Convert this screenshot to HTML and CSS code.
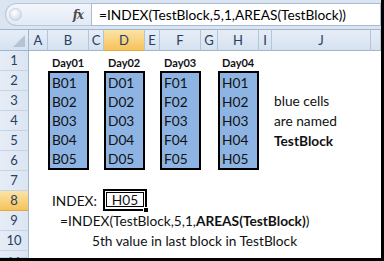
FILE: index.html
```html
<!DOCTYPE html>
<html>
<head>
<meta charset="utf-8">
<link rel="stylesheet" href="styles.css">
</head>
<body>
<div class="frame">
  <div class="fbar">
    <div class="fbox">
      <div class="namebox">
        <span class="knob"></span>
        <span class="fx">fx</span>
      </div>
      <div class="finput">=INDEX(TestBlock,5,1,AREAS(TestBlock))</div>
    </div>
  </div>
  <div class="sheet">
    <div class="ch corner"><span class="tri"></span></div>
    <div class="ch">A</div>
    <div class="ch">B</div>
    <div class="ch">C</div>
    <div class="ch sel">D</div>
    <div class="ch">E</div>
    <div class="ch">F</div>
    <div class="ch">G</div>
    <div class="ch">H</div>
    <div class="ch">I</div>
    <div class="ch">J</div>
    <div class="ch"></div>

    <div class="rh">1</div>
    <div class="rh">2</div>
    <div class="rh">3</div>
    <div class="rh">4</div>
    <div class="rh">5</div>
    <div class="rh">6</div>
    <div class="rh">7</div>
    <div class="rh sel">8</div>
    <div class="rh">9</div>
    <div class="rh">10</div>
    <div class="rh last">11</div>

    <div class="day col-b">Day01</div>
    <div class="day col-d">Day02</div>
    <div class="day col-f">Day03</div>
    <div class="day col-h">Day04</div>

    <div class="block col-b"><span>B01</span><span>B02</span><span>B03</span><span>B04</span><span>B05</span></div>
    <div class="block col-d"><span>D01</span><span>D02</span><span>D03</span><span>D04</span><span>D05</span></div>
    <div class="block col-f"><span>F01</span><span>F02</span><span>F03</span><span>F04</span><span>F05</span></div>
    <div class="block col-h"><span>H01</span><span>H02</span><span>H03</span><span>H04</span><span>H05</span></div>

    <div class="note note1">blue cells</div>
    <div class="note note2">are named</div>
    <div class="note note3"><b>TestBlock</b></div>

    <div class="cell label">INDEX:</div>
    <div class="result"><span class="inner">H05</span><span class="handle"></span></div>
    <div class="cell formula">=INDEX(TestBlock,5,1,<b>AREAS(TestBlock)</b>)</div>
    <div class="cell desc">5th value in last block in TestBlock</div>
  </div>
</div>
</body>
</html>
```

FILE: styles.css
```css
* { box-sizing: border-box; }
html, body { margin: 0; padding: 0; background: #fff; }
body { font-family: Lato, "Open Sans", sans-serif; }

.frame {
  width: 384px;
  height: 261px;
  border-right: 3px solid #000;
  border-bottom: 3px solid #000;
  overflow: hidden;
  background: #fff;
}

.fbar {
  height: 29px;
  background: #dbe5f2;
  padding: 3px 0 3px 5px;
}
.fbox {
  display: flex;
  height: 23px;
}
.namebox {
  width: 86px;
  display: flex;
  align-items: center;
  justify-content: space-between;
  padding: 0 8px 0 3px;
  border: 1px solid #b7c7dc;
  border-right: none;
  border-radius: 12px 0 0 12px;
  background: linear-gradient(#f3f6fb, #e2eaf5);
}
.knob {
  width: 13px;
  height: 13px;
  border-radius: 50%;
  background: radial-gradient(circle at 40% 35%, #ffffff 0%, #e6ebf2 45%, #c2ccd9 100%);
  border: 1px solid #c9d3e0;
}
.fx {
  font-family: "DejaVu Serif", serif;
  font-style: italic;
  font-weight: bold;
  font-size: 12px;
  color: #4a4a4a;
  letter-spacing: -1px;
}
.finput {
  flex: 1;
  background: #fff;
  border: 1px solid #a9bbd2;
  padding-left: 7px;
  font-size: 13.7px;
  line-height: 21px;
  color: #000;
  white-space: nowrap;
}

.sheet {
  display: grid;
  grid-template-columns: 29px 19px 41px 15px 41px 15px 41px 17px 41px 13px 99px 10px;
  grid-template-rows: 22px repeat(10, 20px) 7px;
}

.ch {
  background: linear-gradient(#e6edf7, #d6e2f0);
  border-top: 1px solid #9eb6ce;
  border-bottom: 1px solid #9eb6ce;
  border-right: 1px solid #b1c5db;
  color: #27405f;
  font-size: 13px;
  text-align: center;
  line-height: 20px;
}
.ch.sel {
  background: linear-gradient(#fbe3a8, #f5c35a);
  border-bottom-color: #e3a93f;
  color: #27405f;
}
.corner {
  position: relative;
  border-right: 1px solid #9eb6ce;
}
.tri {
  position: absolute;
  right: 3px;
  bottom: 3px;
  width: 0;
  height: 0;
  border-left: 12px solid transparent;
  border-bottom: 12px solid #b4c3d6;
}

.rh {
  grid-column: 1;
  background: linear-gradient(to right, #e6edf7, #dbe5f2);
  border-right: 1px solid #9eb6ce;
  border-bottom: 1px solid #c5d4e5;
  color: #27405f;
  font-size: 13px;
  text-align: center;
  line-height: 19px;
}
.rh.sel {
  background: linear-gradient(#fbe3a8, #f5c35a);
  border-bottom-color: #e3a93f;
}
.rh.last { line-height: 22px; }

.col-b { grid-column: 3; }
.col-d { grid-column: 5; }
.col-f { grid-column: 7; }
.col-h { grid-column: 9; }

.day {
  grid-row: 2;
  font-size: 11px;
  font-weight: bold;
  color: #111;
  padding-left: 4px;
  align-self: end;
  line-height: 16px;
}

.block {
  grid-row: 3 / span 5;
  background: #8eb4e3;
  border: 2px solid #000;
  margin-bottom: 1px;
  display: flex;
  flex-direction: column;
  padding-left: 2px;
}
.block span {
  height: 20px;
  font-size: 13.7px;
  line-height: 19px;
  color: #111;
}

.note {
  grid-column: 11 / span 2;
  padding-left: 2px;
  font-size: 13.7px;
  line-height: 19px;
  color: #111;
}
.note1 { grid-row: 4; }
.note2 { grid-row: 5; }
.note3 { grid-row: 6; }

.cell {
  font-size: 13.7px;
  line-height: 19px;
  color: #111;
  white-space: nowrap;
}
.label { grid-row: 9; grid-column: 3 / span 2; padding-left: 4px; }
.formula { grid-row: 10; grid-column: 2 / span 11; padding-left: 31px; }
.desc { grid-row: 11; grid-column: 2 / span 11; padding-left: 63px; }

.result {
  grid-row: 9;
  grid-column: 5;
  position: relative;
  margin: -2px 0 0 -1px;
  width: 44px;
  height: 22px;
  border: 2px solid #000;
}
.result .inner {
  position: absolute;
  top: 1px;
  left: 1px;
  right: 1px;
  bottom: 2px;
  border: 1px solid #000;
  font-size: 13.7px;
  line-height: 14px;
  text-align: center;
  color: #111;
}
.handle {
  position: absolute;
  right: -4px;
  bottom: -4px;
  width: 6px;
  height: 6px;
  background: #000;
  border: 1px solid #fff;
}
```
